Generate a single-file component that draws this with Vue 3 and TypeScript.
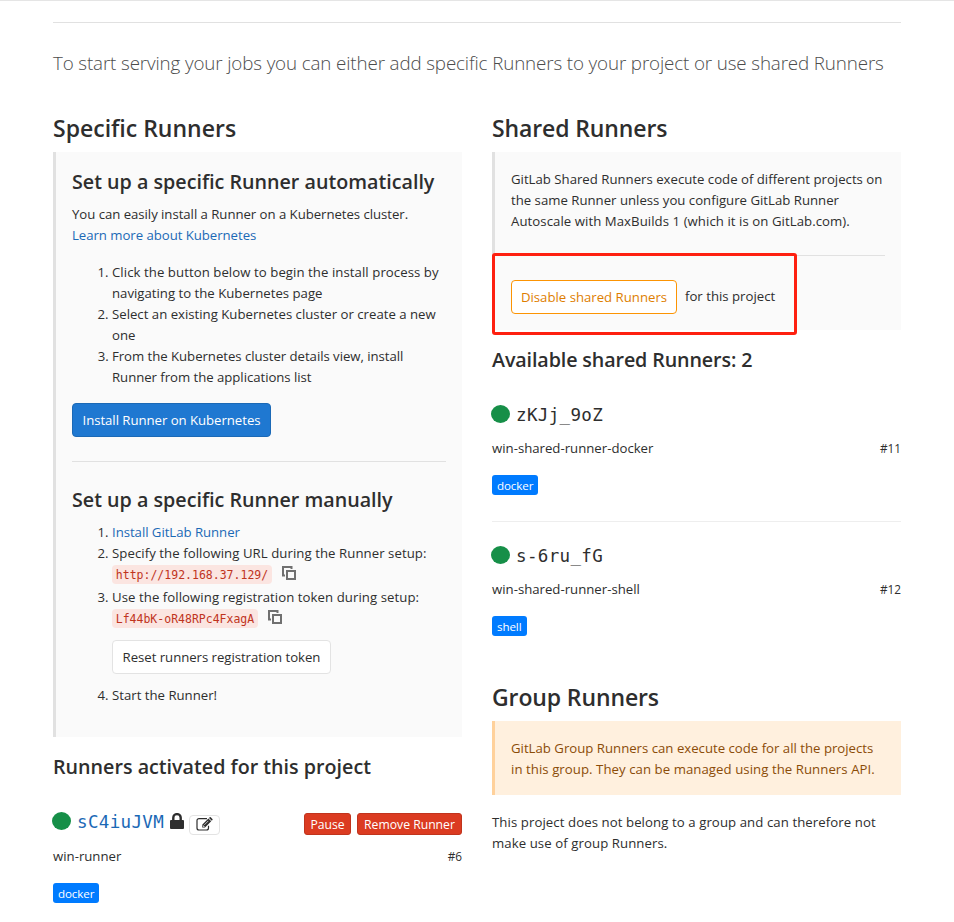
<script setup lang="ts">
interface Runner {
  id: number
  token: string
  name: string
  tag: string
}

const sharedRunners: Runner[] = [
  { id: 11, token: 'zKJj_9oZ', name: 'win-shared-runner-docker', tag: 'docker' },
  { id: 12, token: 's-6ru_fG', name: 'win-shared-runner-shell', tag: 'shell' },
]

const projectRunner: Runner = { id: 6, token: 'sC4iuJVM', name: 'win-runner', tag: 'docker' }
</script>

<template>
  <main class="page">
    <p class="intro">To start serving your jobs you can either add specific Runners to your project or use shared Runners</p>

    <div class="columns">
      <section class="column">
        <h3>Specific Runners</h3>
        <div class="callout specific">
          <h4>Set up a specific Runner automatically</h4>
          <p class="lead">
            You can easily install a Runner on a Kubernetes cluster.<br />
            <a>Learn more about Kubernetes</a>
          </p>
          <ol>
            <li><span class="loose">Click the button below to begin the install process by</span><br />navigating to the Kubernetes page</li>
            <li>Select an existing Kubernetes cluster or create a new<br />one</li>
            <li class="tight">From the Kubernetes cluster details view, install<br />Runner from the applications list</li>
          </ol>
          <button class="btn primary">Install Runner on Kubernetes</button>
          <hr />
          <h4>Set up a specific Runner manually</h4>
          <ol class="manual">
            <li><a class="tight">Install GitLab Runner</a></li>
            <li>
              <span class="loose">Specify the following URL during the Runner setup:</span>
              <div class="copy-row">
                <code class="url">http://192.168.37.129/</code>
                <svg class="copy" viewBox="0 0 14 14"><path d="M9.5 3V1H1v8.500h2M5 5h8v8H5z" /></svg>
              </div>
            </li>
            <li>
              <span class="loose">Use the following registration token during setup:</span>
              <div class="copy-row">
                <code class="token">Lf44bK-oR48RPc4FxagA</code>
                <svg class="copy" viewBox="0 0 14 14"><path d="M9.500 3V1H1v8.500h2M5 5h8v8H5z" /></svg>
              </div>
              <button class="btn reset">Reset runners registration token</button>
            </li>
            <li>Start the Runner!</li>
          </ol>
        </div>

        <h4 class="list-title">Runners activated for this project</h4>
        <article class="runner own">
          <div class="runner-head">
            <span class="dot"></span>
            <a class="hash">{{ projectRunner.token }}</a>
            <svg class="lock" viewBox="0 0 14 16">
              <path class="shackle" d="M3.300 8V4.800a3.700 3.700 0 0 1 7.400 0V8" />
              <rect x="0" y="7" width="14" height="9" rx="1" />
            </svg>
            <button class="edit">
              <svg viewBox="0 0 17 14">
                <path class="frame" d="M11 1.600H3A2 2 0 0 0 1 3.600v7.400a2 2 0 0 0 2 2h7.500a2 2 0 0 0 2-2V8.800" />
                <path class="pencil" d="M6.200 10.500V7.700L12.400 1.500l2.800 2.800L9 10.500zM13 .9l.7-.6q.5-.5 1 0L16.400 2q.5.5 0 1l-.6.700z" />
                <path class="shine" d="M7.200 8.200v1.300h1.400M8.300 7.900l4-4" />
              </svg>
            </button>
            <div class="actions">
              <button class="danger pause">Pause</button>
              <button class="danger remove">Remove Runner</button>
            </div>
          </div>
          <div class="runner-meta"><span>{{ projectRunner.name }}</span><small>#{{ projectRunner.id }}</small></div>
          <span class="badge">{{ projectRunner.tag }}</span>
        </article>
      </section>

      <section class="column">
        <h3 class="shared-title">Shared Runners</h3>
        <div class="callout shared">
          <p>
            GitLab Shared Runners execute code of different projects on<br />
            the same Runner unless you configure GitLab Runner<br />
            <span class="loose">Autoscale with MaxBuilds 1 (which it is on GitLab.com).</span>
          </p>
          <hr />
          <div class="toggle">
            <button class="btn warning">Disable shared Runners</button>
            <span>for this project</span>
          </div>
          <div class="highlight"></div>
        </div>

        <h4 class="list-title available">Available shared Runners: 2</h4>
        <article v-for="runner in sharedRunners" :key="runner.id" class="runner listed">
          <div class="runner-head">
            <span class="dot"></span>
            <span class="hash">{{ runner.token }}</span>
          </div>
          <div class="runner-meta"><span>{{ runner.name }}</span><small>#{{ runner.id }}</small></div>
          <span class="badge">{{ runner.tag }}</span>
        </article>

        <h3 class="group-title">Group Runners</h3>
        <div class="callout group">
          <p>
            GitLab Group Runners can execute code for all the projects<br />
            <span class="loose">in this group. They can be managed using the Runners API.</span>
          </p>
        </div>
        <p class="group-note">
          This project does not belong to a group and can therefore not<br />
          make use of group Runners.
        </p>
      </section>
    </div>
  </main>
</template>

<style>
body {
  background: #fff;
}
</style>

<style scoped>
.page,
.page * {
  box-sizing: border-box;
}
.page {
  height: 922px;
  overflow: hidden;
  padding: 21px 53px 0;
  border-top: 1px solid #e5e5e5;
  font: 13.2px/21px 'Open Sans', 'Noto Sans', sans-serif;
  color: #2e2e2e;
  white-space: nowrap;
}
h3, h4, p, ol {
  margin: 0;
  padding: 0;
}
button {
  font: inherit;
  white-space: nowrap;
  padding: 0;
}
a {
  color: #1b69b6;
}
.loose {
  letter-spacing: 0.06px;
}
.tight {
  letter-spacing: -0.04px;
}
.intro {
  border-top: 1px solid #e1e1e1;
  padding-top: 25px;
  height: 92px;
  font-size: 18.8px;
  line-height: 30px;
  letter-spacing: -0.13px;
  font-weight: 300;
  color: #4c4c4c;
}
.columns {
  display: grid;
  grid-template-columns: 409px 409px;
  gap: 30px;
}
h3 {
  height: 38px;
  font-size: 23px;
  line-height: 28px;
  font-weight: 600;
}
.shared-title,
.group-title {
  letter-spacing: -0.12px;
}
h4 {
  font-size: 19.7px;
  line-height: 28px;
  font-weight: 600;
}
.callout {
  position: relative;
  border-left: 3px solid #e1e1e1;
  background: #fafafa;
  padding: 16px;
}
hr {
  width: 100%;
  height: 1px;
  margin: 0;
  border: 0;
  background: #e1e1e1;
}
.specific {
  height: 585px;
}
.lead {
  margin: 8px 0 16px;
  letter-spacing: -0.04px;
}
ol {
  padding-left: 40px;
}
.btn {
  display: block;
  height: 34px;
  border: 1px solid;
  border-radius: 4px;
}
.primary {
  width: 199px;
  margin: 15px 0 24px;
  border-color: #1b69b6;
  background: #1f78d1;
  color: #fff;
  letter-spacing: -0.04px;
}
.specific hr {
  margin-bottom: 24px;
}
.manual {
  margin-top: 8px;
}
.copy-row {
  display: flex;
  align-items: flex-start;
  gap: 10px;
  height: 23px;
  padding-top: 1px;
}
code {
  height: 19px;
  border-radius: 4px;
  background: #fbe5e1;
  color: #c0341d;
  font: 11.5px/20px 'DejaVu Sans Mono', monospace;
  text-align: center;
}
.url {
  width: 160px;
}
.token {
  width: 146px;
}
.copy {
  width: 14px;
  height: 14px;
  margin-top: 1px;
  fill: none;
  stroke: #707070;
  stroke-width: 2;
}
.reset {
  width: 219px;
  margin: 9px 0 11px;
  border-color: #e3e3e3;
  background: #fff;
  color: #2e2e2e;
  letter-spacing: -0.04px;
}
.list-title {
  padding-top: 16px;
  height: 63px;
}
.runner {
  padding-top: 12px;
}
.listed {
  height: 128px;
}
.listed + .listed {
  height: 141px;
  padding-top: 24px;
  border-top: 1px solid #eee;
}
.runner-head {
  display: flex;
  height: 34px;
  align-items: flex-start;
}
.listed .runner-head {
  height: 33px;
}
.dot {
  width: 19px;
  height: 18px;
  margin: 0 6px 0 -1px;
  border-radius: 50%;
  background: #168f48;
}
.hash {
  width: 87px;
  font: 17.5px/21px 'DejaVu Sans Mono', monospace;
  letter-spacing: 0.35px;
}
.lock {
  width: 14px;
  height: 16px;
  margin: 1px 5px 0 6px;
  fill: #2e2e2e;
}
.shackle {
  fill: none;
  stroke: #2e2e2e;
  stroke-width: 2.400;
}
.edit {
  display: flex;
  width: 31px;
  height: 20px;
  margin-top: 3px;
  padding: 1px 0 0 6px;
  border: 1px solid #e3e3e3;
  border-radius: 4px;
  background: #fff;
}
.edit svg {
  width: 17px;
  height: 14px;
}
.frame {
  fill: none;
  stroke: #2e2e2e;
  stroke-width: 1.200;
}
.pencil {
  fill: #2e2e2e;
}
.shine {
  fill: none;
  stroke: #fff;
  stroke-width: 0.700;
}
.actions {
  display: flex;
  gap: 6px;
  margin: 1px 0 0 auto;
}
.danger {
  height: 22px;
  padding-top: 1px;
  border: 1px solid #c0341d;
  border-radius: 3px;
  background: #db3b21;
  color: #fff;
  font-size: 12.2px;
  line-height: 19px;
}
.pause {
  width: 47px;
}
.remove {
  width: 105px;
}
.runner-meta {
  display: flex;
  justify-content: space-between;
  margin-bottom: 16px;
}
.runner-meta small {
  font-size: 11.8px;
}
.badge {
  display: inline-block;
  height: 20px;
  padding: 0 5px;
  border-radius: 3px;
  background: #007bff;
  color: #fff;
  font-size: 11.6px;
  line-height: 21px;
  letter-spacing: -0.1px;
  vertical-align: top;
}
.shared {
  height: 178px;
  padding-top: 17px;
}
.shared hr {
  margin: 23px 0 24px;
}
.toggle {
  display: flex;
  gap: 8px;
}
.warning {
  width: 166px;
  border-color: #fc9403;
  background: #fff;
  color: #de7e00;
}
.toggle span {
  padding-top: 6px;
}
.highlight {
  position: absolute;
  left: -3px;
  top: 101px;
  width: 305px;
  height: 82px;
  border: 3px solid #fe2010;
  border-radius: 3px;
}
.available {
  letter-spacing: -0.12px;
}
.group-title {
  margin-top: 21px;
}
.group {
  height: 74px;
  padding-top: 17px;
  border-color: #ffd19b;
  background: #fff0de;
  color: #8b4c08;
}
.group-note {
  margin-top: 17px;
  letter-spacing: 0.08px;
}
</style>
